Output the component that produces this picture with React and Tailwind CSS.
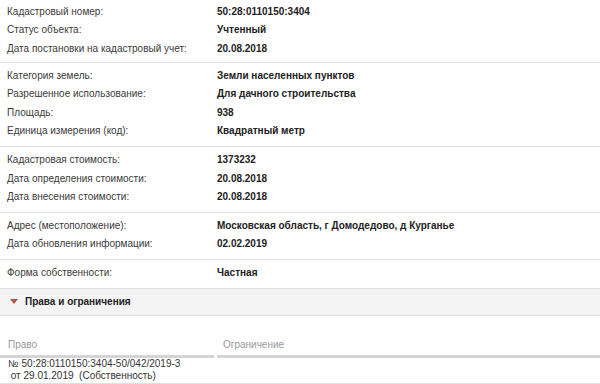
const groups = [
  [
    ["Кадастровый номер:", "50:28:0110150:3404"],
    ["Статус объекта:", "Учтенный"],
    ["Дата постановки на кадастровый учет:", "20.08.2018"],
  ],
  [
    ["Категория земель:", "Земли населенных пунктов"],
    ["Разрешенное использование:", "Для дачного строительства"],
    ["Площадь:", "938"],
    ["Единица измерения (код):", "Квадратный метр"],
  ],
  [
    ["Кадастровая стоимость:", "1373232"],
    ["Дата определения стоимости:", "20.08.2018"],
    ["Дата внесения стоимости:", "20.08.2018"],
  ],
  [
    ["Адрес (местоположение):", "Московская область, г Домодедово, д Курганье"],
    ["Дата обновления информации:", "02.02.2019"],
  ],
  [["Форма собственности:", "Частная"]],
];

function Row({ label, value }) {
  return (
    <div className="flex h-[18.6px] items-center">
      <div className="w-[217px] shrink-0 pl-[7px] text-[#3a3a3a]">{label}</div>
      <div className="font-bold text-[#222]">{value}</div>
    </div>
  );
}

export default function App() {
  return (
    <div className="h-[384px] w-[600px] overflow-hidden bg-white font-['Liberation_Sans',Arial,sans-serif] text-[10px]">
      {groups.map((rows, i) => (
        <div
          key={i}
          className={
            i === 0
              ? "border-b border-[#e2e2e2] pt-[2px] pb-[4px]"
              : "border-b border-[#dedede] pt-[3px] pb-[6px]"
          }
        >
          {rows.map(([l, v]) => (
            <Row key={l} label={l} value={v} />
          ))}
        </div>
      ))}

      {/* раздел прав */}
      <div className="flex h-[27px] items-center border-b border-[#dedede] bg-[#f4f4f5] pl-[10px]">
        <svg width="8" height="5" viewBox="0 0 8 5" className="mr-[7px]">
          <path d="M0 0 L8 0 L4 5 Z" fill="#b05a43" />
        </svg>
        <span className="font-bold text-[#222]">Права и ограничения</span>
      </div>

      <div className="mt-[21px] flex gap-[3px] text-[#9a9a9a]">
        <div className="w-[214px] border-b-[3px] border-[#d4d4d6] pb-[3px] pl-[8px]">Право</div>
        <div className="flex-1 border-b-[3px] border-[#d4d4d6] pb-[3px] pl-[6px]">Ограничение</div>
      </div>
      <div className="flex border-b border-[#e0e0e0] pb-[1px] text-[#333]">
        <div className="w-[217px] whitespace-pre pl-[8px] leading-[12px]">
          {"№ 50:28:0110150:3404-50/042/2019-3\n от 29.01.2019  (Собственность)"}
        </div>
        <div className="flex-1" />
      </div>
    </div>
  );
}
